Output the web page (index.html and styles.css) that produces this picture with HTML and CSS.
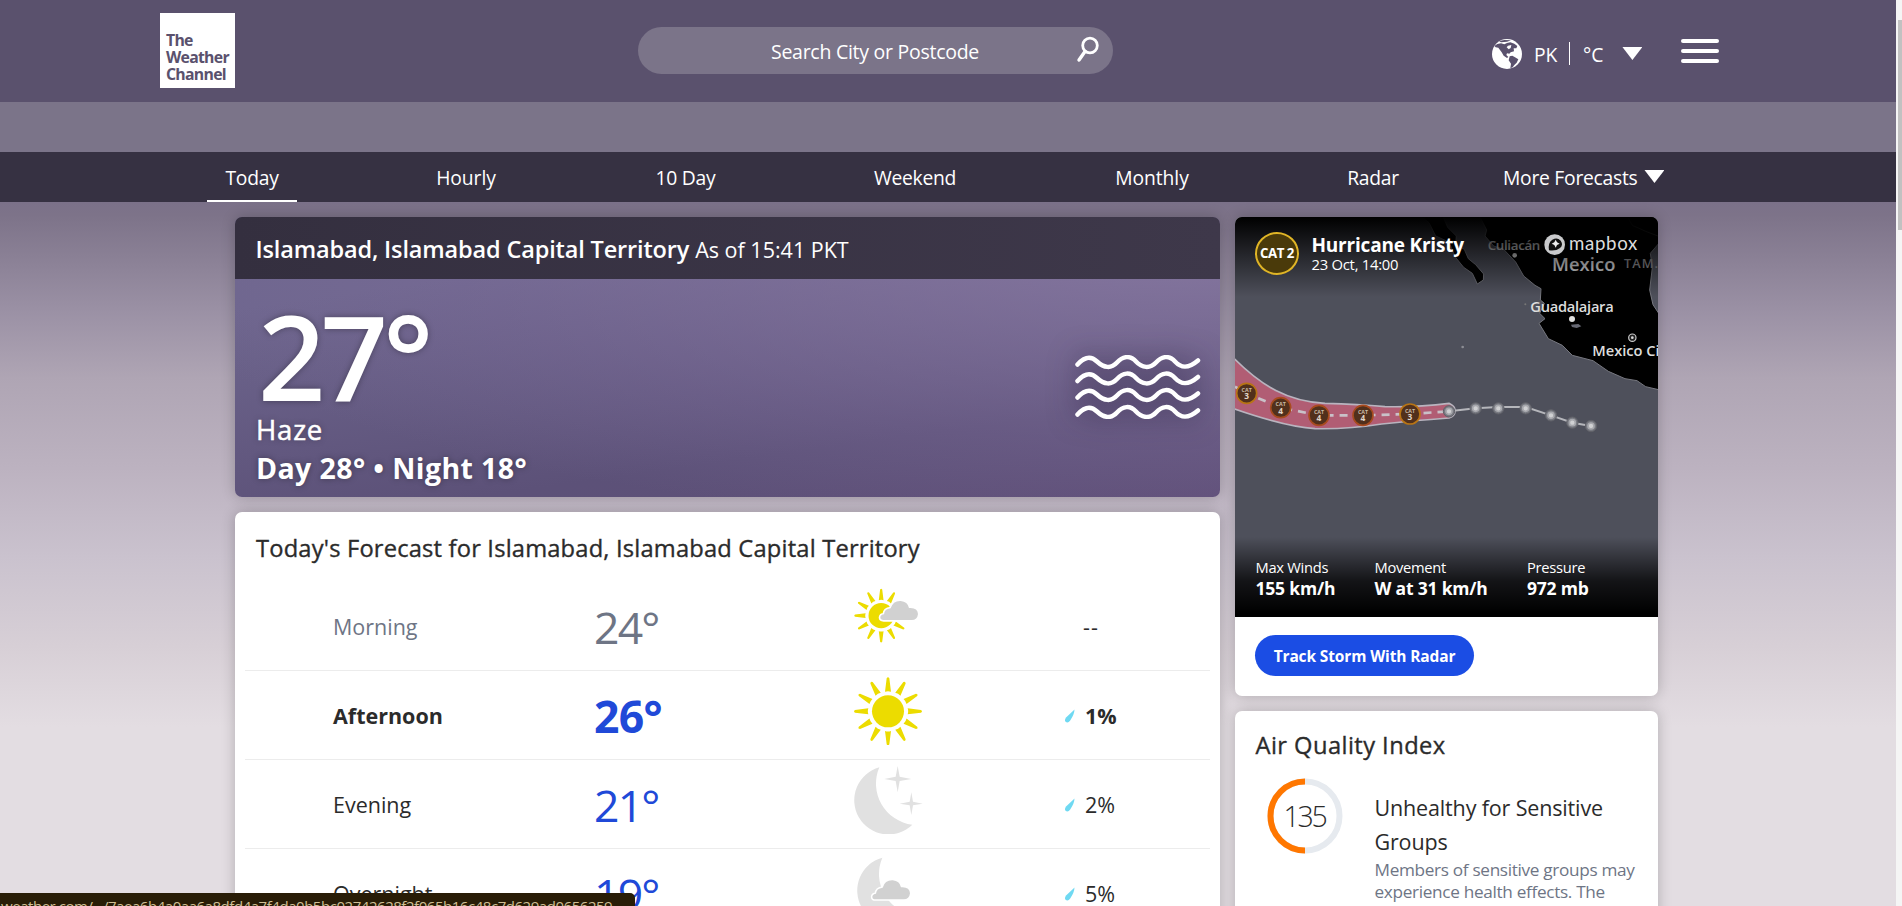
FILE: index.html
```html
<!DOCTYPE html>
<html lang="en">
<head>
<meta charset="utf-8">
<title>Weather</title>
<link rel="stylesheet" href="styles.css">
</head>
<body>
<div class="page">
  <header class="top">
    <div class="logo"><span>The</span><span>Weather</span><span>Channel</span></div>
    <div class="search"><span class="search-text">Search City or Postcode</span>
      <svg class="search-icon" width="24" height="28" viewBox="0 0 24 28"><circle cx="14" cy="9.500" r="7.300" fill="none" stroke="#fff" stroke-width="2.800"/><path d="M9 15.500L3 24" stroke="#fff" stroke-width="3.400" stroke-linecap="round"/></svg>
    </div>
    <div class="locale">
      <svg class="globe" width="30" height="30" viewBox="335 118 90 90"><circle cx="380" cy="163" r="45" fill="#fff"/><path fill="#5a516d" d="M342 139Q350 131 362 131L372 134 380 130 390 128 402 132 411 139 408 146 400 146 401 155 391 158 387 162 380 161 378 166 384 172 380 175 370 168 364 158 354 144 346 143Z"/><path fill="#5a516d" d="M388 170L396 168 404 173 414 179 409 189 402 196 397 203 390 206 392 192 385 182Z"/><path fill="#5a516d" d="M356 124L372 121 392 122 380 126 362 128Z"/><path fill="#fff" d="M383 138L393 136 391 145 385 149 379 143Z"/></svg>
      <span class="cc">PK</span><i class="bar"></i><span class="unit">°C</span><i class="tri"></i>
    </div>
    <div class="burger"><i></i><i></i><i></i></div>
  </header>
  <div class="strip"></div>
  <nav class="nav">
    <a class="on">Today</a><a class="hourly">Hourly</a><a>10 Day</a><a>Weekend</a><a class="monthly">Monthly</a><a class="radar">Radar</a><a class="more">More Forecasts<i class="tri"></i></a>
  </nav>
  <main class="main">
    <div class="left">
      <section class="now">
        <div class="now-head"><h1>Islamabad, Islamabad Capital Territory</h1><span class="asof">As of 15:41 PKT</span></div>
        <div class="now-body">
          <div class="now-text">
            <div class="temp">27°</div>
            <div class="phrase">Haze</div>
            <div class="hilo">Day 28° • Night 18°</div>
          </div>
          <svg class="haze" width="126" height="64" viewBox="0 0 126 64"><g fill="none" stroke="#fff" stroke-width="4.500" stroke-linecap="round"><path id="w" d="M2.500 9.500C9 2.500 15 0 22 6.500S36 14 42 7.500S55 0 61 6.500S75 14 81 7.500S94 0 100 6.500S113 14 123 5.500"/><use href="#w" y="16.500"/><use href="#w" y="33"/><use href="#w" y="50"/></g></svg>
        </div>
      </section>
      <section class="fc">
        <h2>Today's Forecast for Islamabad, Islamabad Capital Territory</h2>
        <div class="row past"><span class="part">Morning</span><span class="deg">24°</span>
          <svg class="wx" width="68" height="68" viewBox="163 84 204 204"><defs><path id="ray" d="M-9-59Q0-62 9-59L4-99Q0-105-4-99Z"/><g id="rays"><use href="#ray"/><use href="#ray" transform="rotate(30)"/><use href="#ray" transform="rotate(60)"/><use href="#ray" transform="rotate(90)"/><use href="#ray" transform="rotate(120)"/><use href="#ray" transform="rotate(150)"/><use href="#ray" transform="rotate(180)"/><use href="#ray" transform="rotate(210)"/><use href="#ray" transform="rotate(240)"/><use href="#ray" transform="rotate(270)"/><use href="#ray" transform="rotate(300)"/><use href="#ray" transform="rotate(330)"/></g><path id="cloud" d="M252 180Q242 180 242 172Q243 164 253 163Q254 147 273 145Q280 122 303 123Q324 125 328 144Q354 142 355 162Q353 180 336 180Z"/></defs><g transform="translate(244.500 167)" fill="#ecdc00"><circle r="38"/><use href="#rays" transform="scale(.79)"/></g><use href="#cloud" fill="#d1d1d1" stroke="#fff" stroke-width="10"/><use href="#cloud" fill="#d1d1d1"/></svg>
          <span class="rain none">--</span></div>
        <div class="row cur"><span class="part">Afternoon</span><span class="deg">26°</span>
          <svg class="wx" width="68" height="68" viewBox="163 351 204 204"><g transform="translate(265 454)" fill="#ecdc00"><circle r="48"/><use href="#rays"/></g></svg>
          <span class="rain"><svg class="drop" width="12" height="14" viewBox="0 0 12 14"><path fill="#6fd9f2" d="M10.500 .5Q10.500 5 6.200 11.500Q4 14.500 1.600 12.800Q.2 11.300 2 8.500Z"/></svg>1%</span></div>
        <div class="row"><span class="part">Evening</span><span class="deg">21°</span>
          <svg class="wx" width="70" height="68" viewBox="163 618 210 204"><g fill="#e1e1e1"><path d="M239 622A102.500 102.500 0 1 0 338 794A124 124 0 0 1 239 622Z"/><path d="M294 618L300 650 335 657 300 663 294 697 288 663 254 657 288 650Z"/><path d="M335 697L340 725 369 731 340 736 335 765 330 736 300 731 330 725Z"/></g></svg>
          <span class="rain"><svg class="drop" width="12" height="14" viewBox="0 0 12 14"><path fill="#6fd9f2" d="M10.500 .5Q10.500 5 6.200 11.500Q4 14.500 1.600 12.800Q.2 11.300 2 8.500Z"/></svg>2%</span></div>
        <div class="row"><span class="part">Overnight</span><span class="deg">19°</span>
          <svg class="wx" width="68" height="68" viewBox="163 885 204 204"><path fill="#e1e1e1" d="M248 893A102.500 102.500 0 1 0 347 1065A124 124 0 0 1 248 893Z"/><use href="#cloud" x="-24" y="838" fill="#d1d1d1" stroke="#fff" stroke-width="9"/><use href="#cloud" x="-24" y="838" fill="#d1d1d1"/></svg>
          <span class="rain"><svg class="drop" width="12" height="14" viewBox="0 0 12 14"><path fill="#6fd9f2" d="M10.500 .5Q10.500 5 6.200 11.500Q4 14.500 1.600 12.800Q.2 11.300 2 8.500Z"/></svg>5%</span></div>
      </section>
    </div>
    <aside class="right">
      <section class="storm">
        <div class="map">
          <svg class="map-art" width="423" height="400" viewBox="30 21 1269 1200">
            <path d="M30 21H1299V1221H30Z" fill="#4e505b"/>
            <path d="M590 21L612 38 632 78 672 96 690 140 716 172 742 190 757 222 775 210 776 192 752 164 730 146 718 118 692 104 694 78 668 52 655 21Z" stroke="#6f7078" stroke-width="3"/>
            <path d="M765 21L785 60 780 78 806 108 836 118 872 156 896 198 930 226 948 236 946 270 958 280 944 310 960 326 942 340 970 386 1012 406 1042 436 1104 452 1150 484 1200 506 1236 512 1262 530 1305 540V316L1284 284 1274 240 1282 172 1276 130 1305 96V0Z" stroke="#777880" stroke-width="3"/>
            <path d="M1208 21L1222 46 1262 64 1299 78" fill="none" stroke="#333" stroke-width="3"/>
            <path d="M1038 344l22-2 9 7-14 5-14-3z" fill="#666873"/><circle cx="713" cy="411" r="4" fill="#8c8d94"/><circle cx="901" cy="283" r="3" fill="#777"/>
            <path d="M20 438C110 530 190 575 300 580Q400 582 480 590Q580 592 672 580Q692 590 690 604Q690 618 672 624Q560 632 470 642Q370 658 270 656Q180 650 20 594Z" fill="#b15d74" stroke="#b9b4bf" stroke-width="5"/>
            <path d="M30 530L65 550 167 593 282 616 414 616 555 612 672 604" fill="none" stroke="#c9c1c8" stroke-width="8" stroke-dasharray="24 18" stroke-dashoffset="6"/>
            <path d="M672 604L752 595 820 591 902 591 978 616 1042 638 1098 648" fill="none" stroke="#b5b6bb" stroke-width="6"/>
            <g fill="#777981" stroke="#606168" stroke-width="3"><circle cx="672" cy="604" r="17"/><circle cx="752" cy="595" r="17"/><circle cx="820" cy="595" r="17"/><circle cx="902" cy="595" r="17"/><circle cx="978" cy="616" r="17"/><circle cx="1042" cy="638" r="17"/><circle cx="1098" cy="648" r="17"/></g>
            <g fill="#d0d1d3" stroke="#a7a8ad" stroke-width="5"><circle cx="672" cy="604" r="9"/><circle cx="752" cy="595" r="9"/><circle cx="820" cy="595" r="9"/><circle cx="902" cy="595" r="9"/><circle cx="978" cy="616" r="9"/><circle cx="1042" cy="638" r="9"/><circle cx="1098" cy="648" r="9"/></g>
            <g fill="#51301c" stroke-width="5"><circle cx="65" cy="550" r="30" stroke="#b87414"/><circle cx="167" cy="593" r="30" stroke="#a84b1e"/><circle cx="282" cy="616" r="30" stroke="#a84b1e"/><circle cx="414" cy="616" r="30" stroke="#a84b1e"/><circle cx="555" cy="612" r="30" stroke="#b87414"/></g>
            <g class="cat"><text x="65" y="546">CAT</text><text x="167" y="589">CAT</text><text x="282" y="612">CAT</text><text x="414" y="612">CAT</text><text x="555" y="608">CAT</text></g>
            <g class="catn"><text x="65" y="568">3</text><text x="167" y="611">4</text><text x="282" y="634">4</text><text x="414" y="634">4</text><text x="555" y="630">3</text></g>
            <circle cx="869" cy="136" r="7" fill="#ddd"/><circle cx="1041" cy="327" r="9" fill="#e0e0e0"/><circle cx="1222" cy="383" r="11" fill="#222" stroke="#ccc" stroke-width="3.500"/><circle cx="1222" cy="383" r="4" fill="#ddd"/>
            <g class="place"><text x="788" y="119" textLength="158" font-size="40" fill="#e4e4e8">Culiacán</text><text x="981" y="182" textLength="190" font-size="55" fill="#e4e4e8">Mexico</text><text x="1197" y="174" textLength="102" font-size="38" fill="#909094">TAM.</text><text x="916" y="307" textLength="250" fill="#ddd">Guadalajara</text><text x="1102" y="438" textLength="242" fill="#ddd">Mexico City</text></g>
          </svg>
          <div class="map-top">
            <div class="badge">CAT 2</div>
            <div class="storm-name"><b>Hurricane Kristy</b><span class="when">23 Oct, 14:00</span></div>
          </div>
          <svg class="mapbox" width="96" height="26" viewBox="955 66 288 78"><circle cx="990" cy="104" r="31" fill="#c9cacc"/><path d="M973 121Q969 98 983 89Q998 81 1008 92Q1017 104 1006 114Q994 124 973 121Z" fill="#111"/><path d="M993 89l4 8 8 4-8 4-4 8-4-8-8-4 8-4z" fill="#eee"/><text x="1033" y="119" textLength="205">mapbox</text></svg>
          <div class="stats">
            <div>Max Winds<b>155 km/h</b></div>
            <div>Movement<b>W at 31 km/h</b></div>
            <div>Pressure<b>972 mb</b></div>
          </div>
        </div>
        <a class="btn">Track Storm With Radar</a>
      </section>
      <section class="aqi">
        <h2>Air Quality Index</h2>
        <div class="aqi-row">
          <div class="dial"><svg width="76" height="76" viewBox="0 0 76 76"><circle cx="38" cy="38" r="34.500" fill="none" stroke="#e6eaef" stroke-width="6"/><path d="M38 72.500A34.500 34.500 0 0 1 38 3.500" fill="none" stroke="#ff7700" stroke-width="6"/></svg><span class="num">135</span></div>
          <div class="aqi-text"><p class="lvl">Unhealthy for Sensitive<br>Groups</p><p class="desc">Members of sensitive groups may<br>experience health effects. The</p></div>
        </div>
      </section>
    </aside>
  </main>
  <div class="status">weather.com/.../7aea6b4a0aa6a8dfd4a7f4da0b5bc02742628f2f065b16c48c7d629ad0656259</div>
  <div class="scroll"><i></i></div>
</div>
</body>
</html>
```
FILE: styles.css
```css
* { box-sizing: border-box; }
body { margin: 0; font-family: "Open Sans", "Noto Sans", sans-serif; color: #2b2b2b; }
h1, h2, p { margin: 0; font-weight: inherit; }
i { display: block; }
.page { position: relative; width: 1902px; height: 906px; overflow: hidden; background: linear-gradient(#7b7189 202px, #7d7389 215px, #9b91a5 312px, #afa5b4 378px, #bcb2c0 468px, #cac2ce 557px, #d7cfd6 646px, #e3dde2 727px); }
.top { display: flex; height: 102px; padding-left: 160px; background: #5a516d; color: #fff; }
.logo { display: flex; flex-direction: column; width: 75px; height: 75px; margin-top: 13px; padding: 19px 0 0 6px; background: #fff; color: #5a516d; font-size: 15.8px; line-height: 17px; font-weight: 700; letter-spacing: -.72px; }
.logo span { align-self: flex-start; }
.search { display: flex; flex: none; width: 475px; height: 47px; margin: 27px 0 0 403px; padding: 0 13px 0 133px; border-radius: 24px; background: #7b7489; justify-content: space-between; font-size: 19.5px; line-height: 50px; letter-spacing: -.27px; }
.search-icon { margin-top: 9px; }
.locale { display: flex; flex: none; width: 189px; margin: 39px 0 0 379px; font-size: 19.3px; line-height: 32px; height: 32px; }
.cc { margin-left: 12px; width: 25px; }
.bar { width: 1px; height: 23px; margin: 3px 13px 0 10px; background: #fff; }
.tri { width: 20px; height: 13px; background: #fff; clip-path: polygon(0 0, 100% 0, 50% 100%); }
.locale .tri { margin: 8px 0 0 19px; }
.burger { display: flex; flex-direction: column; gap: 6px; margin-top: 39px; }
.burger i { width: 38px; height: 4px; border-radius: 2px; background: #fff; }
.strip { height: 50px; background: #7b7489; }
.nav { display: grid; grid-template-columns: 90px 338px 101px 358px 116px 293px 200px; height: 50px; padding-left: 207px; background: #363142; color: #fff; font-size: 19.3px; line-height: 52px; text-align: center; letter-spacing: -.26px; }
.nav a { height: 50px; }
.on { border-bottom: 2px solid #fff; }
.hourly, .monthly { letter-spacing: -.08px; }
.radar { padding-left: 33px; }
.more { display: flex; gap: 7px; }
.more .tri { margin-top: 18px; }
.main { display: flex; gap: 15px; padding: 15px 0 0 235px; }
.left { width: 985px; display: flex; flex-direction: column; gap: 15px; }
.right { width: 423px; display: flex; flex-direction: column; gap: 15px; }
.now, .fc, .storm, .aqi { border-radius: 7px; box-shadow: 0 0 14px rgba(0,0,0,.22); overflow: hidden; }
.now { height: 280px; color: #fff; background: radial-gradient(ellipse at 100% 10%, rgba(140,124,165,.8), rgba(130,112,158,.3) 55%, transparent 80%), linear-gradient(172deg, #6e668e 22%, #5c5178 75%, #5f4f78); }
.now-head { display: flex; gap: 6px; height: 62px; padding-left: 20.5px; background: linear-gradient(90deg, #342f3f, #3e384a); line-height: 65px; }
.now-head h1 { font-size: 23.5px; font-weight: 600; letter-spacing: -.15px; }
.asof { font-size: 21.5px; }
.now-body { display: flex; justify-content: space-between; height: 218px; padding: 0 19px 0 21px; text-shadow: 0 0 6px rgba(0,0,0,.35); }
.temp { margin-top: 32px; height: 102px; padding-left: 2px; font-size: 118px; font-weight: 600; line-height: 89px; letter-spacing: -5px; }
.phrase { height: 38px; font-size: 27.5px; line-height: 33px; letter-spacing: .8px; -webkit-text-stroke: .5px #fff; }
.hilo { font-size: 28.5px; font-weight: 700; line-height: 35px; letter-spacing: .4px; }
.haze { margin-top: 76px; filter: drop-shadow(0 0 14px rgba(30,20,50,.8)); }
.fc { height: 430px; background: #fff; }
.fc h2 { height: 70px; padding-left: 21px; font-size: 23.7px; line-height: 72px; letter-spacing: .19px; -webkit-text-stroke: .35px #2b2b2b; }
.row { display: grid; grid-template-columns: 88px 261px 260px 210px 1fr; grid-template-areas: ". part deg wx rain"; height: 89px; margin: 0 10px; border-bottom: 1px solid #ececec; }
.row .part { grid-area: part; font-size: 21.5px; line-height: 89px; }
.row .deg { grid-area: deg; font-size: 44.5px; line-height: 89px; color: #2049d8; letter-spacing: -1.8px; }
.row.past .part, .row.past .deg { color: #6e7585; }
.row.cur .deg { letter-spacing: -.7px; }
.wx { grid-area: wx; margin-top: 6px; }
.rain { grid-area: rain; display: flex; gap: 9px; font-size: 21.5px; line-height: 89px; }
.rain.none { padding-left: 19px; letter-spacing: 1px; }
.drop { margin-top: 38px; }
.cur { font-weight: 700; }
.storm { height: 479px; background: #fff; }
.map { position: relative; height: 400px; color: #fff; }
.map-art { display: block; }
.map-top { position: absolute; inset: 0 0 auto; display: flex; gap: 12.5px; height: 80px; padding: 15px 20px; background: linear-gradient(#000, rgba(0,0,0,.7) 30%, transparent); }
.badge { width: 44px; height: 43px; border: 2px solid #e0b526; border-radius: 50%; background: #4a3a0a; font-size: 13.3px; font-weight: 700; line-height: 39px; text-align: center; white-space: nowrap; letter-spacing: -.5px; }
.storm-name { display: flex; flex-direction: column; align-items: flex-start; padding-top: 1px; font-size: 19px; line-height: 25px; letter-spacing: -.2px; }
.when { font-size: 14.8px; line-height: 12px; letter-spacing: -.25px; }
.mapbox { position: absolute; left: 308px; top: 15px; fill: #ddd; font: 400 56px Lato, sans-serif; }
.cat { fill: #c9b9a5; font-size: 16px; font-weight: 700; text-anchor: middle; }
.catn { fill: #e0d5c8; font-size: 25px; font-weight: 700; text-anchor: middle; }
.place { font-size: 44px; font-weight: 600; }
.stats { position: absolute; inset: auto 0 0; display: grid; grid-template-columns: 119px 152.500px 1fr; height: 80px; padding: 20px 0 0 20.500px; background: linear-gradient(transparent, rgba(0,0,0,.75) 55%, #000 95%); font-size: 14.7px; line-height: 21px; letter-spacing: -.28px; }
.stats b { display: block; font-size: 17.5px; line-height: 21px; letter-spacing: -.2px; }
.btn { display: flex; justify-content: center; width: 219px; height: 41px; margin: 18px 20px; border-radius: 21px; background: #1b4de4; color: #fff; font-size: 15.5px; font-weight: 700; line-height: 43px; letter-spacing: -.13px; }
.aqi { height: 260px; background: #fff; padding: 0 20.5px; }
.aqi h2 { height: 67px; font-size: 23.7px; line-height: 68px; letter-spacing: .44px; -webkit-text-stroke: .35px #2b2b2b; }
.aqi-row { display: flex; gap: 32px; padding-left: 11px; }
.dial { display: grid; width: 76px; height: 76px; }
.dial > * { grid-area: 1 / 1; }
.num { font-size: 28.5px; font-weight: 300; line-height: 77px; text-align: center; letter-spacing: -2.2px; }
.aqi-text { white-space: nowrap; padding-top: 13px; }
.lvl { font-size: 21.5px; line-height: 34px; letter-spacing: -.15px; }
.desc { font-size: 17.2px; line-height: 22px; color: #6e7585; letter-spacing: -.32px; }
.status { position: absolute; left: 0; top: 893px; width: 635px; height: 13px; overflow: hidden; border-radius: 0 5px 0 0; background: #291d07; color: #cfbf95; font-size: 15px; line-height: 27px; padding-left: 1px; white-space: nowrap; letter-spacing: -.46px; }
.scroll { position: absolute; right: 0; top: 0; width: 6px; height: 906px; background: #f5f5f5; padding: 20px 0 0 2px; }
.scroll i { height: 210px; background: #c1c1c1; }
```
